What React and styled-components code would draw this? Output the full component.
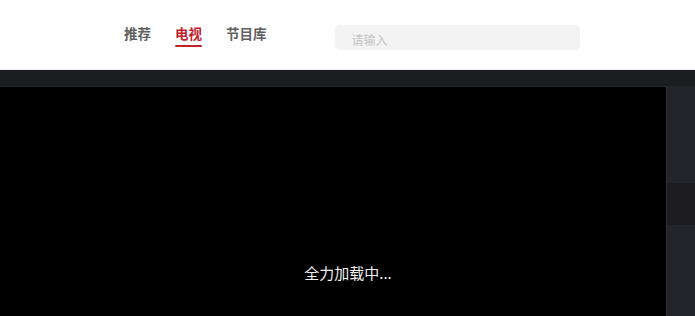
import React from 'react';
import styled, { createGlobalStyle } from 'styled-components';

const GlobalStyle = createGlobalStyle`
  html, body {
    margin: 0;
    padding: 0;
    background: #000;
    overflow: hidden;
  }
  body {
    font-family: "Noto Sans CJK SC", "Noto Sans", sans-serif;
  }
`;

const Page = styled.div`
  width: 695px;
  height: 316px;
  display: flex;
  flex-direction: column;
`;

const Header = styled.header`
  height: 70px;
  background: #fff;
  display: flex;
  align-items: flex-start;
  padding-left: 124px;
  box-sizing: border-box;
  border-bottom: 1px solid #ececec;
`;

const Tabs = styled.nav`
  display: flex;
  gap: 24px;
  padding-top: 23px;
`;

const Tab = styled.a`
  position: relative;
  font-size: 13.5px;
  font-weight: 700;
  line-height: 20px;
  color: ${(p) => (p.$active ? '#c1212b' : '#606060')};
  text-decoration: none;

  &::after {
    content: '';
    display: ${(p) => (p.$active ? 'block' : 'none')};
    position: absolute;
    left: 0;
    right: 0;
    bottom: -4px;
    height: 2px;
    border-radius: 1px;
    background: #c1212b;
  }
`;

const Search = styled.input`
  margin-left: 68px;
  margin-top: 25px;
  width: 245px;
  height: 25px;
  box-sizing: border-box;
  border: none;
  outline: none;
  border-radius: 5px;
  background: #f3f3f3;
  padding: 3px 0 0 17px;
  font-family: inherit;
  font-size: 12px;
  color: #333;

  &::placeholder {
    color: #c4c4c4;
  }
`;

const Band = styled.div`
  height: 16px;
  background: #1c1d21;
  border-bottom: 1px solid #232428;
`;

const Main = styled.div`
  flex: 1;
  display: flex;
  min-height: 0;
`;

const Player = styled.div`
  flex: 1;
  background: #000;
  display: flex;
  align-items: flex-end;
  justify-content: center;
  padding-bottom: 33px;
  padding-left: 30px;
`;

const Loading = styled.div`
  color: #f2f2f2;
  font-size: 15px;
  line-height: 20px;
`;

const Side = styled.aside`
  width: 28px;
  display: flex;
  flex-direction: column;
  background: #24252a;
  border-left: 1px solid #2e2f34;
`;

const SideItem = styled.div`
  height: ${(p) => p.$h}px;
  background: ${(p) => (p.$dark ? '#1d1d21' : '#24252a')};
  flex: ${(p) => (p.$grow ? 1 : 'none')};
`;

export default function App() {
  return (
    <Page>
      <GlobalStyle />
      <Header>
        <Tabs>
          <Tab>推荐</Tab>
          <Tab $active>电视</Tab>
          <Tab>节目库</Tab>
        </Tabs>
        <Search placeholder="请输入" />
      </Header>
      <Band />
      <Main>
        <Player>
          <Loading>全力加载中...</Loading>
        </Player>
        <Side>
          <SideItem $h={96} />
          <SideItem $h={42} $dark />
          <SideItem $grow />
        </Side>
      </Main>
    </Page>
  );
}
